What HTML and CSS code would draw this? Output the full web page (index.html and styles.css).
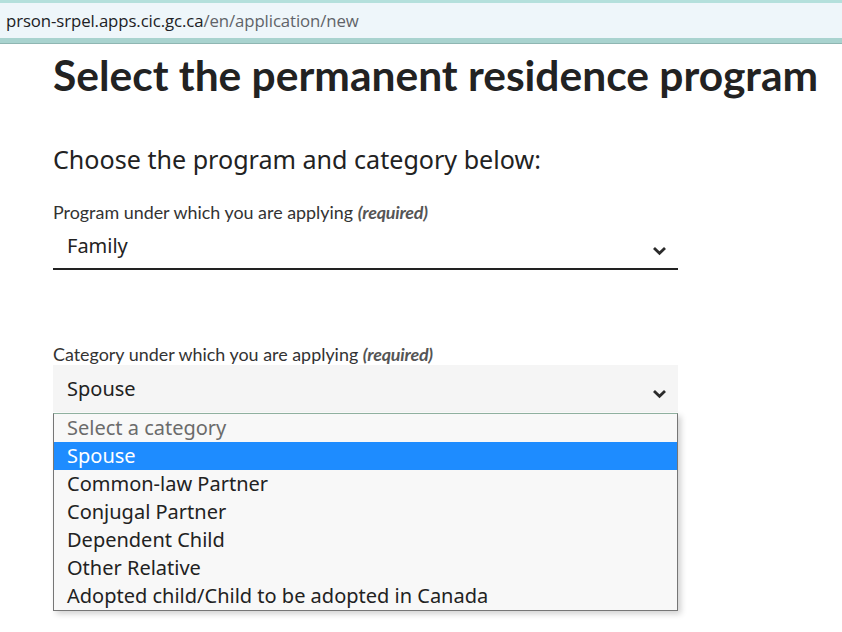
FILE: index.html
```html
<!DOCTYPE html>
<html lang="en">
<head>
<meta charset="utf-8">
<link rel="stylesheet" href="styles.css">
</head>
<body>
<div class="urlbar"><span class="host">prson-srpel.apps.cic.gc.ca</span><span class="path">/en/application/new</span></div>
<main class="page">
  <h1 class="title">Select the permanent residence program</h1>
  <h2 class="subtitle">Choose the program and category below:</h2>
  <div class="field">
    <div class="label">Program under which you are applying <em>(required)</em></div>
    <div class="select underline">
      <span class="value">Family</span>
      <svg class="chev" width="15" height="10" viewBox="0 0 15 10"><path d="M2 2 L7.5 7.3 L13 2" fill="none" stroke="#2b2b2b" stroke-width="2.8"/></svg>
    </div>
  </div>
  <div class="field field2">
    <div class="label">Category under which you are applying <em>(required)</em></div>
    <div class="select filled">
      <span class="value">Spouse</span>
      <svg class="chev" width="15" height="10" viewBox="0 0 15 10"><path d="M2 2 L7.5 7.3 L13 2" fill="none" stroke="#2b2b2b" stroke-width="2.8"/></svg>
    </div>
    <ul class="list">
      <li class="placeholder">Select a category</li>
      <li class="active">Spouse</li>
      <li>Common-law Partner</li>
      <li>Conjugal Partner</li>
      <li>Dependent Child</li>
      <li>Other Relative</li>
      <li>Adopted child/Child to be adopted in Canada</li>
    </ul>
  </div>
</main>
</body>
</html>
```
FILE: styles.css
```css
html, body { margin: 0; padding: 0; background: #fff; }
body { width: 842px; height: 632px; overflow: hidden; }
.urlbar {
  height: 35px;
  border-top: 3px solid #b4e0dc;
  border-bottom: 5px solid #a9d3cf;
  box-shadow: 0 1px 0 #8fb6b2;
  background: #eef6fa;
  font-family: "Open Sans", "Noto Sans", sans-serif;
  font-size: 16.8px;
  line-height: 35px;
  padding-left: 6px;
  letter-spacing: -0.1px;
}
.host { color: #202124; }
.path { color: #5f6368; }
.page { padding-left: 53px; width: 625px; }
.title {
  font-family: Lato, "Liberation Sans", sans-serif;
  font-weight: 700;
  font-size: 42.5px;
  line-height: 48px;
  margin: 8px 0 0 0;
  color: #222;
  white-space: nowrap;
}
.subtitle {
  font-family: "Noto Sans", "Open Sans", sans-serif;
  font-weight: 400;
  font-size: 25.1px;
  line-height: 32px;
  margin: 44px 0 0 0;
  color: #222;
  white-space: nowrap;
}
.field { margin-top: 26px; }
.field2 { margin-top: 73px; }
.label {
  font-family: Lato, "Liberation Sans", sans-serif;
  font-size: 17.9px;
  line-height: 22px;
  color: #333;
  white-space: nowrap;
}
.label em { color: #555; font-style: italic; font-weight: 700; letter-spacing: -0.2px; }
.select {
  display: flex;
  align-items: center;
  justify-content: space-between;
  padding: 0 11px 0 14px;
  font-family: "Noto Sans", "Open Sans", sans-serif;
  font-size: 20px;
  color: #222;
}
.chev { margin-top: 10px; }
.underline { height: 45px; border-bottom: 2px solid #222; }
.filled { height: 47px; background: #f5f5f5; }
.list {
  list-style: none;
  margin: 1px 0 0 0;
  padding: 0;
  width: 623px;
  border: 1px solid #767676;
  border-top-color: #8fb09f;
  background: #f8f8f8;
  box-shadow: 3px 3px 6px rgba(0,0,0,0.18);
  font-family: "Noto Sans", "Open Sans", sans-serif;
  font-size: 20px;
  color: #222;
}
.list li { height: 28px; line-height: 28px; padding-left: 13px; white-space: nowrap; }
.list .placeholder { color: #6b6b6b; }
.list .active { background: #1e8cff; color: #fff; }
```
